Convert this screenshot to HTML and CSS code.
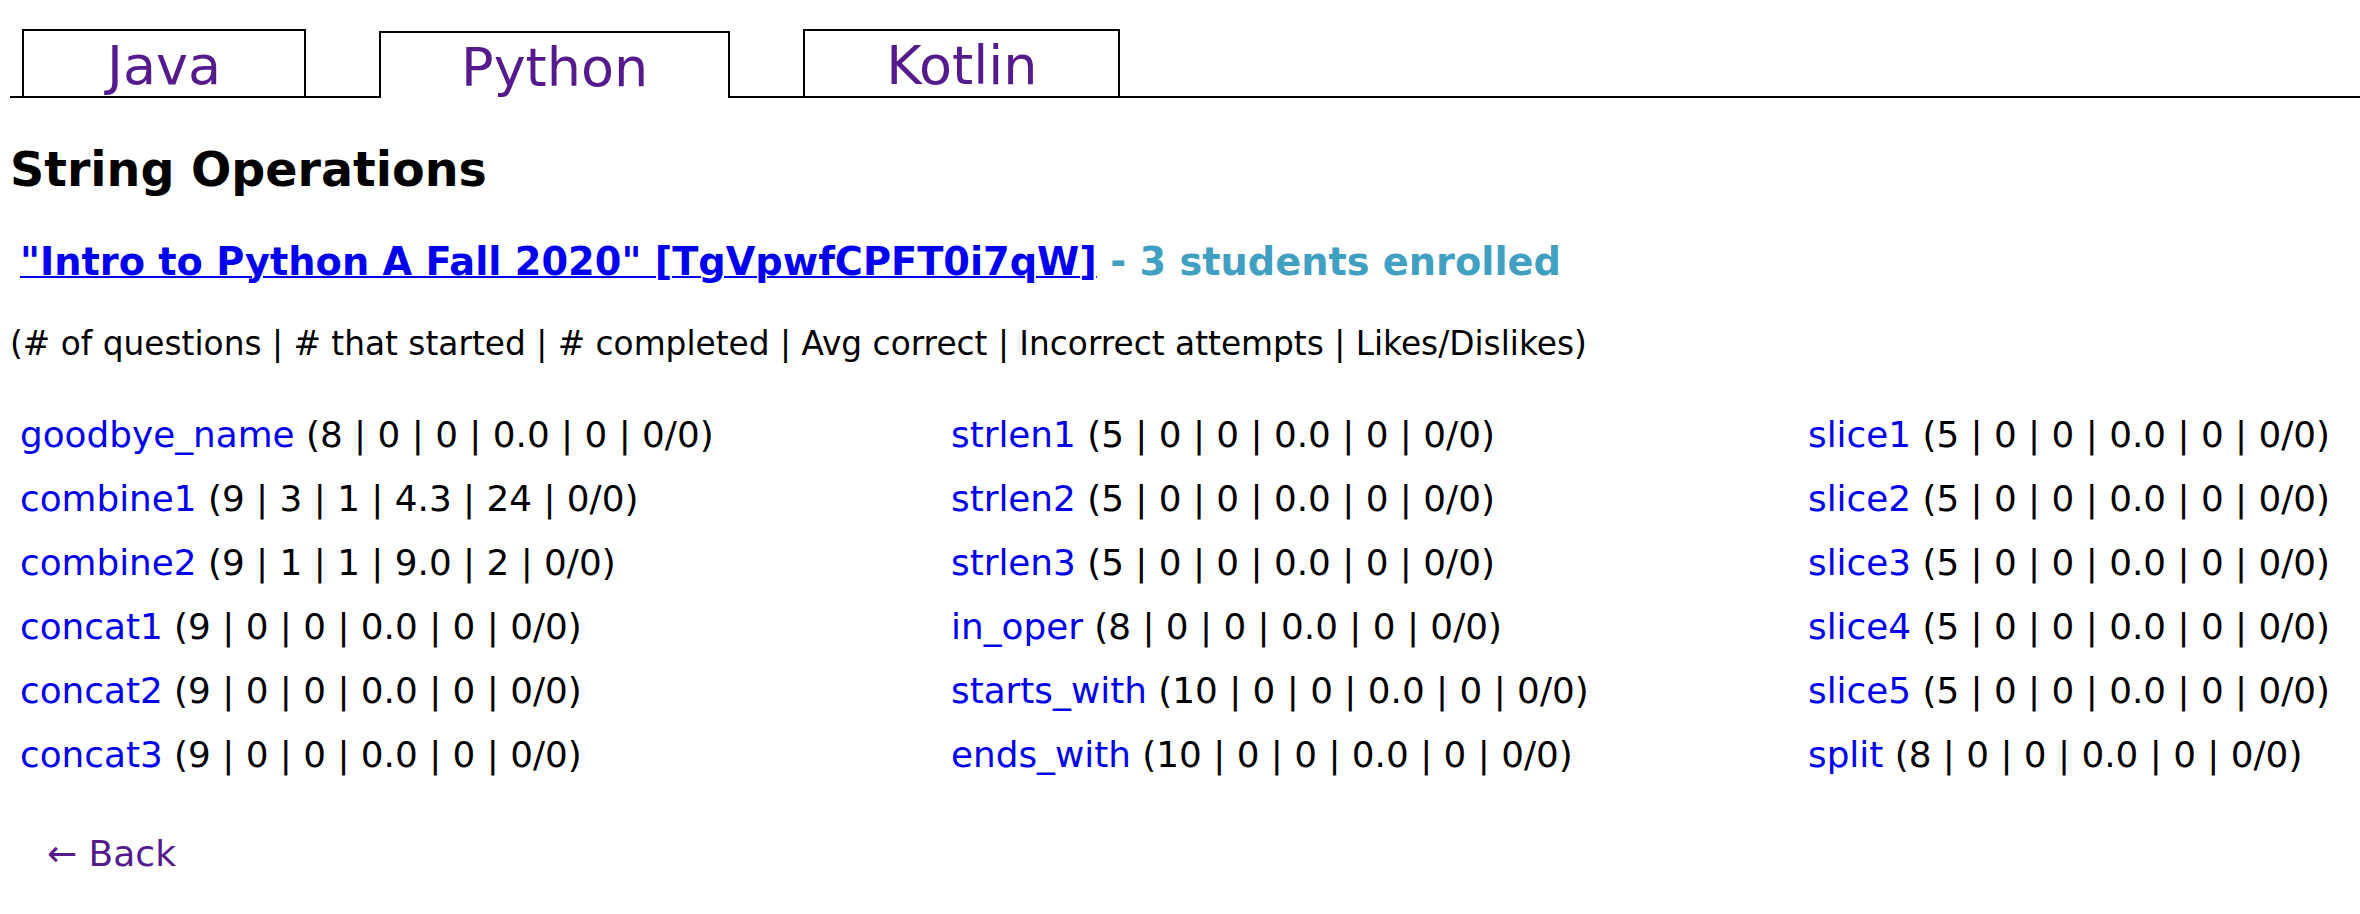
FILE: index.html
```html
<!DOCTYPE html>
<html lang="en">
<head>
<meta charset="utf-8">
<title>String Operations</title>
<link rel="stylesheet" href="styles.css">
</head>
<body>
<nav class="tabs">
  <a class="tab tab-wide" href="#">Java</a>
  <a class="tab tab-active" href="#">Python</a>
  <a class="tab" href="#">Kotlin</a>
</nav>
<h2 class="title">String Operations</h2>
<p class="course"><a class="course-link" href="#">"Intro to Python A Fall 2020" [TgVpwfCPFT0i7qW]</a> <span class="enrolled">- 3 students enrolled</span></p>
<p class="legend">(# of questions | # that started | # completed | Avg correct | Incorrect attempts | Likes/Dislikes)</p>
<div class="grid">
  <div class="item"><a href="#">goodbye_name</a> (8 | 0 | 0 | 0.0 | 0 | 0/0)</div>
  <div class="item"><a href="#">strlen1</a> (5 | 0 | 0 | 0.0 | 0 | 0/0)</div>
  <div class="item"><a href="#">slice1</a> (5 | 0 | 0 | 0.0 | 0 | 0/0)</div>
  <div class="item"><a href="#">combine1</a> (9 | 3 | 1 | 4.3 | 24 | 0/0)</div>
  <div class="item"><a href="#">strlen2</a> (5 | 0 | 0 | 0.0 | 0 | 0/0)</div>
  <div class="item"><a href="#">slice2</a> (5 | 0 | 0 | 0.0 | 0 | 0/0)</div>
  <div class="item"><a href="#">combine2</a> (9 | 1 | 1 | 9.0 | 2 | 0/0)</div>
  <div class="item"><a href="#">strlen3</a> (5 | 0 | 0 | 0.0 | 0 | 0/0)</div>
  <div class="item"><a href="#">slice3</a> (5 | 0 | 0 | 0.0 | 0 | 0/0)</div>
  <div class="item"><a href="#">concat1</a> (9 | 0 | 0 | 0.0 | 0 | 0/0)</div>
  <div class="item"><a href="#">in_oper</a> (8 | 0 | 0 | 0.0 | 0 | 0/0)</div>
  <div class="item"><a href="#">slice4</a> (5 | 0 | 0 | 0.0 | 0 | 0/0)</div>
  <div class="item"><a href="#">concat2</a> (9 | 0 | 0 | 0.0 | 0 | 0/0)</div>
  <div class="item"><a href="#">starts_with</a> (10 | 0 | 0 | 0.0 | 0 | 0/0)</div>
  <div class="item"><a href="#">slice5</a> (5 | 0 | 0 | 0.0 | 0 | 0/0)</div>
  <div class="item"><a href="#">concat3</a> (9 | 0 | 0 | 0.0 | 0 | 0/0)</div>
  <div class="item"><a href="#">ends_with</a> (10 | 0 | 0 | 0.0 | 0 | 0/0)</div>
  <div class="item"><a href="#">split</a> (8 | 0 | 0 | 0.0 | 0 | 0/0)</div>
</div>
<a class="back" href="#">&larr; Back</a>
</body>
</html>
```
FILE: styles.css
```css
html, body {
  margin: 0;
  padding: 0;
  background: #fff;
}
body {
  padding-left: 10px;
  font-family: "DejaVu Sans", Verdana, sans-serif;
  color: #000;
}
.tabs {
  display: flex;
  align-items: flex-end;
  gap: 73px;
  margin-top: 29px;
  padding-left: 12px;
  border-bottom: 2px solid #000;
}
.tab {
  display: block;
  border: 2px solid #000;
  border-bottom: none;
  padding: 5px 81px 0;
  height: 60px;
  font-size: 54px;
  line-height: 60px;
  color: #551a8b;
  text-decoration: none;
  background: #fff;
}
.tab-wide {
  padding-left: 83px;
  padding-right: 83px;
}
.tab-active {
  margin-bottom: -2px;
  padding-left: 80px;
  padding-right: 80px;
}
.title {
  margin: 44px 0 0;
  font-size: 47.5px;
  line-height: 56px;
  font-weight: bold;
}
.course {
  margin: 39px 0 0 10px;
  font-size: 38.3px;
  line-height: 50px;
  font-weight: bold;
}
.course-link {
  color: #0000ee;
  text-decoration: underline;
  text-decoration-thickness: 2px;
}
.enrolled {
  color: #41a0c2;
}
.legend {
  margin: 38px 0 0;
  font-size: 32.8px;
  line-height: 38px;
}
.grid {
  display: grid;
  grid-template-columns: 931px 857px 1fr;
  grid-auto-rows: 64px;
  margin: 40px 0 0 10px;
  font-size: 35.8px;
  line-height: 64px;
}
.item {
  white-space: nowrap;
}
.item a {
  color: #0000ee;
  text-decoration: none;
}
.back {
  display: inline-block;
  margin: 45px 0 0 37px;
  font-size: 36px;
  line-height: 44px;
  color: #551a8b;
  text-decoration: none;
}
```
